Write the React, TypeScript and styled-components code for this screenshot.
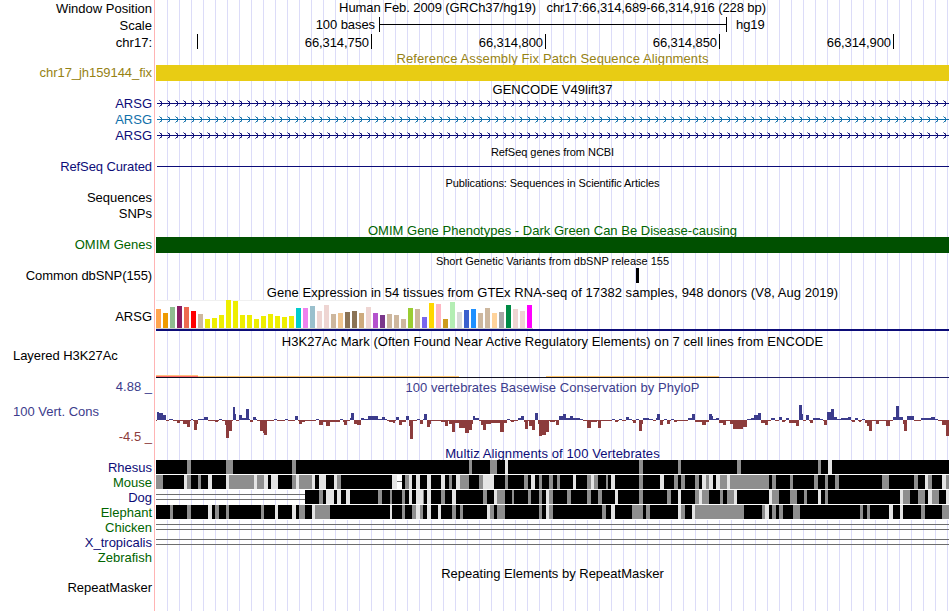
import React from 'react';
import styled, { createGlobalStyle } from 'styled-components';

const GlobalStyle = createGlobalStyle`
  body {
    margin: 0;
    background: #fff;
  }
`;

const Page = styled.main`
  width: 950px;
  height: 611px;
  overflow: hidden;
  font-family: 'Liberation Sans', Arial, sans-serif;
  font-size: 13px;
  color: #000;
  background-color: #fff;
  background-image: linear-gradient(#ffb4b4, #ffb4b4),
    repeating-linear-gradient(
      to right,
      #dcdcf8 0,
      #dcdcf8 1px,
      transparent 1px,
      transparent 12px
    );
  background-repeat: no-repeat;
  background-position: 154px 0, 167px 0;
  background-size: 1px 100%, 782px 100%;
`;

const Row = styled.div<{ $height: number }>`
  display: grid;
  grid-template-columns: 155px 795px;
  height: ${(p) => p.$height}px;
`;

const Label = styled.div<{
  $color?: string;
  $left?: boolean;
  $line?: number;
  $spacing?: number;
}>`
  padding: ${(p) => (p.$left ? '0 0 0 13px' : '0 3px 0 0')};
  text-align: ${(p) => (p.$left ? 'left' : 'right')};
  line-height: ${(p) => p.$line || 16}px;
  letter-spacing: ${(p) => p.$spacing || 0}px;
  color: ${(p) => p.$color || '#000'};
  white-space: pre;
`;

const Title = styled.div<{
  $height: number;
  $color?: string;
  $small?: boolean;
  $nested?: boolean;
  $clip?: boolean;
  $spacing?: number;
  $drop?: number;
}>`
  box-sizing: border-box;
  display: flex;
  justify-content: center;
  height: ${(p) => p.$height}px;
  margin-left: ${(p) => (p.$nested ? 0 : 155)}px;
  padding-top: ${(p) => p.$drop || 0}px;
  width: 795px;
  overflow: ${(p) => (p.$clip ? 'hidden' : 'visible')};
  line-height: 16px;
  font-size: ${(p) => (p.$small ? 11 : 13)}px;
  letter-spacing: ${(p) => p.$spacing || 0}px;
  color: ${(p) => p.$color || '#000'};
  white-space: pre;
`;

const Bar = styled.div<{ $color: string }>`
  margin: 0 1px;
  background: ${(p) => p.$color};
`;

const ScaleCell = styled.div`
  display: flex;
  line-height: 16px;
`;

const ScaleText = styled.span<{ $width: number; $right?: boolean }>`
  box-sizing: border-box;
  width: ${(p) => p.$width}px;
  padding: ${(p) => (p.$right ? '0 4px 0 0' : '0 0 0 9px')};
  text-align: ${(p) => (p.$right ? 'right' : 'left')};
  letter-spacing: -0.08px;
`;

const ScaleBar = styled.span`
  box-sizing: border-box;
  width: 348px;
  height: 15px;
  border: solid #000;
  border-width: 0 1px;
  background: linear-gradient(#000, #000) no-repeat 0 7px / 100% 1px;
`;

const Tick = styled.span<{ $width: number }>`
  box-sizing: border-box;
  width: ${(p) => p.$width}px;
  height: 15px;
  padding-right: 2px;
  border-right: 1px solid #000;
  text-align: right;
  line-height: 17px;
  letter-spacing: -0.08px;
`;

const SideLabels = styled.div`
  display: grid;
  grid-template-rows: 25px 25px 16px;
  margin-top: -1px;
`;

const Svg = styled.svg`
  display: block;
  shape-rendering: crispEdges;
`;

const NAVY = '#0c0c78';
const GREEN = '#006400';
const UP = '#3c3c8c';
const DOWN = '#8c3c3c';

// x, width, height
const positive = `157 2 8,159 4 7,163 3 5,169 4 1,191 2 1,198 6 1,204 4 3,219 3 1,233 2 13,235 1 6,
239 3 5,242 4 2,246 3 11,249 1 1,253 3 3,256 1 1,274 3 1,285 3 1,295 3 4,316 3 1,340 3 1,350 1 2,
351 3 7,361 3 2,364 4 1,368 10 4,378 4 1,382 3 3,385 2 1,396 3 3,406 3 4,417 3 1,423 1 1,424 3 6,
473 2 4,475 4 2,507 3 1,518 3 2,521 3 4,535 3 7,559 4 4,563 3 6,566 4 2,570 3 4,573 7 2,580 3 1,
612 3 1,619 3 1,626 3 3,629 3 1,636 3 1,643 6 2,649 4 1,656 1 2,657 3 6,664 3 1,671 3 1,688 4 2,
692 3 6,709 3 6,712 1 4,713 3 1,716 3 2,747 4 1,751 3 2,754 4 5,758 3 7,771 4 2,779 3 3,786 3 2,
799 3 15,802 1 6,806 3 5,813 7 2,820 3 1,827 4 8,831 3 11,834 3 3,837 4 1,841 7 2,848 3 3,855 3 2,
862 3 1,893 3 3,896 3 14,899 4 3,907 7 4,921 10 2,931 4 3,935 3 1`;

const negative = `177 3 3,183 4 4,187 3 7,194 3 10,197 1 4,215 3 2,225 1 5,226 3 18,229 3 11,250 3 2,
260 3 11,263 1 13,264 3 15,299 3 4,302 3 2,319 4 5,323 3 2,326 4 6,330 10 2,343 1 2,344 3 5,354 3 4,
357 4 5,389 4 2,393 2 3,399 3 5,402 4 2,409 1 6,410 3 19,420 3 4,427 3 7,430 1 4,441 4 2,445 3 6,
449 3 4,452 3 12,455 4 3,459 6 8,465 4 13,469 3 10,472 1 4,481 2 5,483 3 10,486 5 4,491 9 3,
500 4 12,504 3 3,511 3 2,524 1 2,525 3 9,529 3 6,532 3 10,538 1 4,539 3 16,542 4 15,546 3 12,
550 5 2,556 3 5,587 4 8,591 6 2,598 3 8,615 3 2,623 3 1,633 3 3,639 3 11,642 1 4,660 3 5,667 3 4,
674 3 2,695 7 2,702 4 5,706 3 2,719 4 3,723 3 5,730 3 4,733 10 9,743 4 7,761 4 3,765 3 5,782 3 2,
789 7 3,796 3 6,810 3 3,824 3 5,852 3 2,859 2 2,865 2 3,867 2 6,869 3 11,876 3 4,886 4 6,903 1 4,
904 3 11,942 4 5,946 3 16`;

const parse = (data: string) =>
  data.split(',').map((item) => item.trim().split(' ').map(Number));

const upBars = parse(positive);
const downBars = parse(negative);

// stretches of the axis that no positive bar stands on
const axis: number[][] = [];
let edge = 156;
upBars.forEach(([x, w]) => {
  if (x > edge) axis.push([edge, x - edge]);
  edge = x + w;
});
axis.push([edge, 949 - edge]);

const tissues = `19 ffa54f,15 ee9a00,21 8fbc8f,22 8b1c62,21 ee6a50,17 ff0000,14 cdb79e,9 eeee00,
10 eeee00,13 eeee00,28 eeee00,27 eeee00,13 eeee00,13 eeee00,9 eeee00,12 eeee00,14 eeee00,12 eeee00,
11 eeee00,12 eeee00,20 00cdcd,20 ee82ee,22 9ac0cd,17 eed5d2,23 eed5d2,14 cdb79e,15 eec591,16 8b7355,
17 8b7355,15 cdaa7d,21 eed5d2,15 b452cd,13 7a378b,14 cdb79e,13 cdb79e,9 cdb79e,20 9acd32,19 cdb79e,
11 7a67ee,25 ffd700,24 ffb6c1,9 cd9b1d,26 b4eeb4,16 d9d9d9,18 3a5fcd,19 1e90ff,15 cdb79e,20 cdb79e,
15 ffd39b,16 a6a6a6,23 008b45,19 eed5d2,17 eed5d2,23 ff00ff`
  .split(',')
  .map((item) => item.trim().split(' '));

// g: weaker match, l: weakest match, w: gap; then x and width
const species = [
  {
    name: 'Rhesus',
    color: NAVY,
    start: 156,
    cells: `g187 4,g226 7,g292 4,g469 3,g490 7,l505 3,g639 4,g678 3,g737 4,g818 3,l828 4`,
  },
  {
    name: 'Mouse',
    color: GREEN,
    start: 156,
    cells: `g156 7,l184 3,g187 4,g198 3,l208 4,l226 3,g229 25,l254 3,g257 7,l264 4,l271 7,g292 4,l296 3,
g299 13,l312 3,l319 7,l334 3,g337 4,l392 5,w397 5,g405 4,l409 3,l416 4,l427 4,l441 4,g449 3,l456 4,
g460 9,g479 4,l483 11,g505 3,g524 4,l531 4,g539 3,g549 4,g557 3,l573 3,g587 4,l591 3,g594 4,g606 2,
l611 4,g639 4,l660 4,g674 4,g681 4,g695 4,l702 4,g706 3,l709 4,l716 4,g720 7,l727 3,g730 39,g772 4,
g790 3,g814 4,g825 3,g835 4,g882 7,g914 4,l925 3,g928 4,l942 4,g946 3`,
  },
  {
    name: 'Dog',
    color: NAVY,
    start: 305,
    cells: `g319 4,l326 8,l337 4,l346 4,g378 4,g390 2,g402 3,l409 3,l416 7,g423 1,l427 4,g441 4,l452 4,
g483 4,l494 3,g497 8,g512 2,g528 3,g539 3,l546 3,g549 4,g567 4,g587 4,g598 4,l615 3,g639 4,g667 4,
l678 3,g695 4,l699 3,g702 7,g720 3,g727 7,l734 3,l769 3,g772 7,g790 7,g804 3,l818 3,g825 3,l900 3,
g903 7,g918 7,l928 4,g932 7,l946 3`,
  },
  {
    name: 'Elephant',
    color: GREEN,
    start: 156,
    cells: `g170 3,g187 4,l208 4,g215 4,g226 3,g261 3,l275 3,l292 4,g299 6,l312 3,g315 15,l390 2,g402 3,
g412 4,l416 4,g420 3,l427 4,l438 3,g452 4,g460 3,l487 3,g490 4,g497 8,g539 3,l546 3,g549 4,g602 4,
l611 4,g632 11,g646 4,l678 3,g681 4,l692 3,g695 49,g762 3,l765 4,g772 4,g779 4,g793 7,g860 3,g867 3,
l889 4,l900 3,g921 4,g942 7`,
  },
];

const shades: Record<string, string> = {
  g: '#8e8e8e',
  l: '#e4e4e4',
  w: '#fff',
};

function Plot({ height, children }: { height: number; children: React.ReactNode }) {
  return (
    <Svg width={795} height={height} viewBox={`155 0 795 ${height}`}>
      {children}
    </Svg>
  );
}

function Gene({ color }: { color: string }) {
  const tips = Array.from({ length: 99 }, (_, i) => 162 + i * 8);
  return (
    <Row $height={16}>
      <Label $color={color} $line={18}>
        ARSG
      </Label>
      <Plot height={16}>
        <rect x={157} y={8} width={792} height={1} fill={color} />
        <g fill={color}>
          {tips.map((x) => (
            <React.Fragment key={x}>
              <path d={`M${x - 1} 7h1v3h-1zM${x - 2} 6h1v1h-1zM${x - 2} 10h1v1h-1z`} />
              <path
                d={`M${x - 3} 5h1v1h-1zM${x - 3} 11h1v1h-1zM${x - 1} 6h1v1h-1zM${x - 1} 10h1v1h-1z`}
                opacity={0.55}
              />
            </React.Fragment>
          ))}
        </g>
      </Plot>
    </Row>
  );
}

function DoubleLine({ end = 949 }: { end?: number }) {
  return (
    <>
      <rect x={156} y={4} width={end - 156} height={1} fill="#6e6e6e" />
      <rect x={156} y={9} width={end - 156} height={1} fill="#6e6e6e" />
    </>
  );
}

function Alignment({ name, color, start, cells }: (typeof species)[number]) {
  return (
    <Row $height={15}>
      <Label $color={color}>{name}</Label>
      <Plot height={15}>
        <rect x={start} width={949 - start} height={15} fill="#fff" />
        {start > 156 && <DoubleLine end={start} />}
        <rect x={start} width={949 - start} height={14} />
        {parse(cells.replace(/[glw]/g, '')).map(([x, w], i) => (
          <rect
            key={x}
            x={x}
            width={w}
            height={14}
            fill={shades[cells.split(',')[i].trim()[0]]}
          />
        ))}
        {name === 'Mouse' && <rect x={397} y={6} width={5} height={1} fill="#6e6e6e" />}
      </Plot>
    </Row>
  );
}

export default function App() {
  return (
    <Page>
      <GlobalStyle />
      <Row $height={17}>
        <Label $line={18}>Window Position</Label>
        <Title $height={17} $nested $spacing={-0.09}>
          {'Human Feb. 2009 (GRCh37/hg19)   chr17:66,314,689-66,314,916 (228 bp)'}
        </Title>
      </Row>
      <Row $height={17}>
        <Label $line={18}>Scale</Label>
        <ScaleCell>
          <ScaleText $width={224} $right>
            100 bases
          </ScaleText>
          <ScaleBar />
          <ScaleText $width={60}>hg19</ScaleText>
        </ScaleCell>
      </Row>
      <Row $height={16}>
        <Label $line={18}>chr17:</Label>
        <ScaleCell>
          <Tick $width={43} />
          <Tick $width={174}>66,314,750</Tick>
          <Tick $width={174}>66,314,800</Tick>
          <Tick $width={174}>66,314,850</Tick>
          <Tick $width={174}>66,314,900</Tick>
        </ScaleCell>
      </Row>

      <Title $height={15} $drop={1} $clip $spacing={0.12} $color="#968214">
        Reference Assembly Fix Patch Sequence Alignments
      </Title>
      <Row $height={15}>
        <Label $color="#968214" $spacing={-0.06}>
          chr17_jh159144_fix
        </Label>
        <Bar $color="#e8cc14" />
      </Row>

      <Title $height={15} $drop={2}>
        GENCODE V49lift37
      </Title>
      <Gene color={NAVY} />
      <Gene color="#1070aa" />
      <Gene color={NAVY} />

      <Title $height={15} $small $drop={1} $spacing={-0.04}>
        RefSeq genes from NCBI
      </Title>
      <Row $height={17}>
        <Label $color={NAVY} $line={18} $spacing={-0.1}>
          RefSeq Curated
        </Label>
        <Plot height={16}>
          <rect x={157} y={8} width={792} height={1} fill={NAVY} />
        </Plot>
      </Row>

      <Title $height={15} $small $spacing={-0.08}>
        Publications: Sequences in Scientific Articles
      </Title>
      <Row $height={16}>
        <Label>Sequences</Label>
      </Row>
      <Row $height={16}>
        <Label>SNPs</Label>
      </Row>

      <Title $height={15} $drop={1} $clip $spacing={0.01} $color={GREEN}>
        OMIM Gene Phenotypes - Dark Green Can Be Disease-causing
      </Title>
      <Row $height={15}>
        <Label $color={GREEN}>OMIM Genes</Label>
        <Bar $color="#005000" />
      </Row>

      <Title $height={16} $small $drop={1}>
        Short Genetic Variants from dbSNP release 155
      </Title>
      <Row $height={16}>
        <Label $spacing={-0.1}>Common dbSNP(155)</Label>
        <Plot height={16}>
          <rect x={636} width={3} height={15} />
        </Plot>
      </Row>

      <Title $height={16} $drop={1} $spacing={0.045}>
        Gene Expression in 54 tissues from GTEx RNA-seq of 17382 samples, 948 donors (V8, Aug 2019)
      </Title>
      <Row $height={34}>
        <Label $line={34}>ARSG</Label>
        <Plot height={34}>
          <rect x={156} width={377} height={29} fill="#fff" />
          <rect x={156} width={377} height={1} fill="#f0f0f0" />
          <rect x={156} y={28} width={377} height={1} fill="#cccccc" />
          {tissues.map(([h, color], i) => (
            <rect key={i} x={156 + i * 7} y={28 - +h} width={5} height={h} fill={`#${color}`} />
          ))}
          <rect x={156} y={29} width={793} height={2} fill={NAVY} />
        </Plot>
      </Row>

      <Title $height={14} $spacing={0.045}>
        H3K27Ac Mark (Often Found Near Active Regulatory Elements) on 7 cell lines from ENCODE
      </Title>
      <Row $height={32}>
        <Label $left $spacing={-0.05}>
          Layered H3K27Ac
        </Label>
        <Plot height={32}>
          <rect x={156} y={27} width={42} height={1} fill="#ffc080" />
          <rect x={156} y={28} width={303} height={1} fill="#ffc468" />
          <rect x={546} y={28} width={173} height={1} fill="#ffc468" />
          <rect x={156} y={28} width={42} height={1} fill="#ff6464" />
          <rect x={156} y={29} width={563} height={1} fill="#101020" />
          <rect x={719} y={29} width={230} height={1} fill="#202068" />
        </Plot>
      </Row>

      <Row $height={66}>
        <SideLabels>
          <Label $color={UP}>4.88 _</Label>
          <Label $color={UP} $left>
            100 Vert. Cons
          </Label>
          <Label $color={DOWN}>-4.5 _</Label>
        </SideLabels>
        <div>
          <Title $height={16} $nested $spacing={0.04} $color={UP}>
            100 vertebrates Basewise Conservation by PhyloP
          </Title>
          <Plot height={50}>
            {axis.map(([x, w]) => (
              <rect key={x} x={x} y={24} width={w} height={1} fill={DOWN} />
            ))}
            {upBars.map(([x, w, h]) => (
              <rect key={x} x={x} y={24 - h} width={w} height={h} fill={UP} />
            ))}
            {downBars.map(([x, w, h]) => (
              <rect key={x} x={x} y={24} width={w} height={h} fill={DOWN} />
            ))}
          </Plot>
        </div>
      </Row>

      <Title $height={14} $clip $spacing={0.1} $color={NAVY}>
        Multiz Alignments of 100 Vertebrates
      </Title>
      {species.map((s) => (
        <Alignment key={s.name} {...s} />
      ))}
      <Row $height={15}>
        <Label $color={GREEN}>Chicken</Label>
        <Plot height={15}>
          <DoubleLine />
        </Plot>
      </Row>
      <Row $height={15}>
        <Label $color={NAVY}>X_tropicalis</Label>
        <Plot height={15}>
          <DoubleLine />
        </Plot>
      </Row>
      <Row $height={15}>
        <Label $color={GREEN}>Zebrafish</Label>
      </Row>

      <Title $height={15} $drop={1}>
        Repeating Elements by RepeatMasker
      </Title>
      <Row $height={16}>
        <Label>RepeatMasker</Label>
      </Row>
    </Page>
  );
}
